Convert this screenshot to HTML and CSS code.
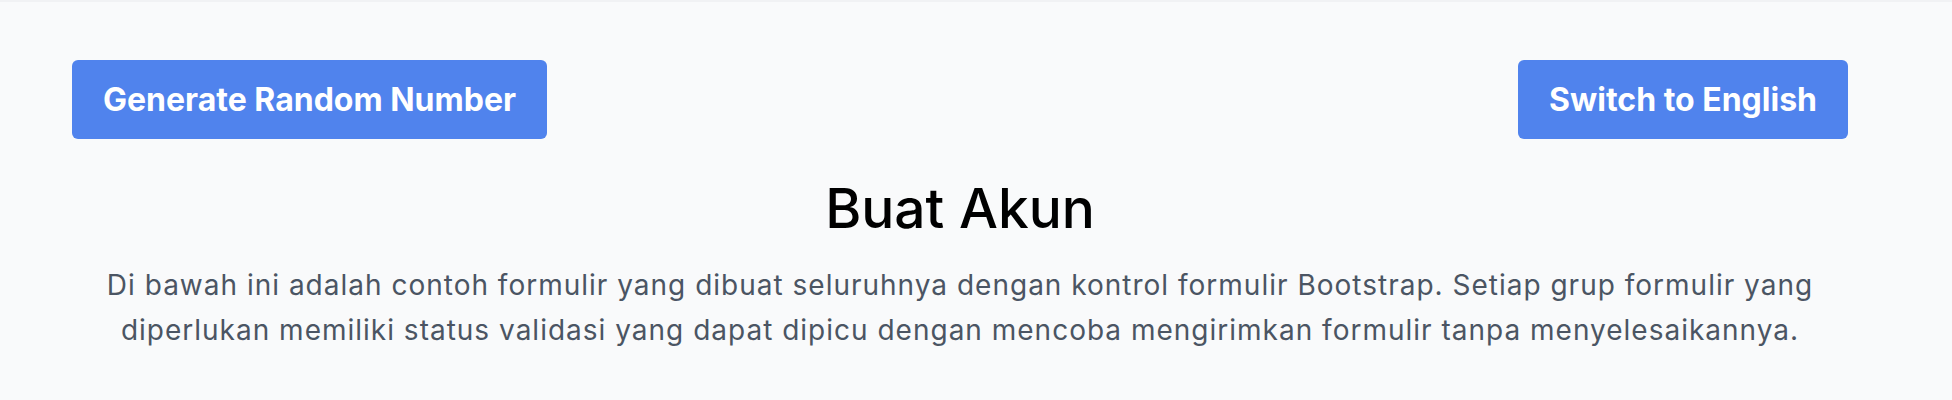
FILE: index.html
```html
<!DOCTYPE html>
<html lang="id">
<head>
<meta charset="utf-8">
<title>Buat Akun</title>
<link rel="stylesheet" href="styles.css">
</head>
<body>
<div class="page">
  <div class="container">
    <div class="toolbar">
      <button class="btn">Generate Random Number</button>
      <button class="btn">Switch to English</button>
    </div>
    <header class="intro">
      <h1 class="title">Buat Akun</h1>
      <p class="lead">Di bawah ini adalah contoh formulir yang dibuat seluruhnya dengan kontrol formulir Bootstrap. Setiap grup formulir yang diperlukan memiliki status validasi yang dapat dipicu dengan mencoba mengirimkan formulir tanpa menyelesaikannya.</p>
    </header>
  </div>
</div>
</body>
</html>
```

FILE: styles.css
```css
html, body {
  margin: 0;
  padding: 0;
}
body {
  background: #f9fafb;
  font-family: Inter, "Noto Sans", "Liberation Sans", sans-serif;
  height: 400px;
  overflow: hidden;
}
.page {
  border-top: 2px solid #f1f2f4;
  padding: 58px 104px 0 72px;
}
.container {
  display: flex;
  flex-direction: column;
}
.toolbar {
  display: flex;
  justify-content: space-between;
  align-items: center;
}
.btn {
  background: #5083ed;
  color: #ffffff;
  border: none;
  border-radius: 6px;
  font-family: Inter, "Noto Sans", sans-serif;
  font-weight: 700;
  font-size: 32px;
  line-height: 40px;
  height: 79px;
  padding: 0 31px;
}
.intro {
  text-align: center;
  padding-top: 36px;
}
.title {
  margin: 0;
  font-size: 55px;
  line-height: 66px;
  font-weight: 500;
  color: #000000;
}
.lead {
  margin: 22px 0 0;
  font-size: 28px;
  line-height: 45px;
  letter-spacing: 1px;
  color: #4b5563;
}
```
